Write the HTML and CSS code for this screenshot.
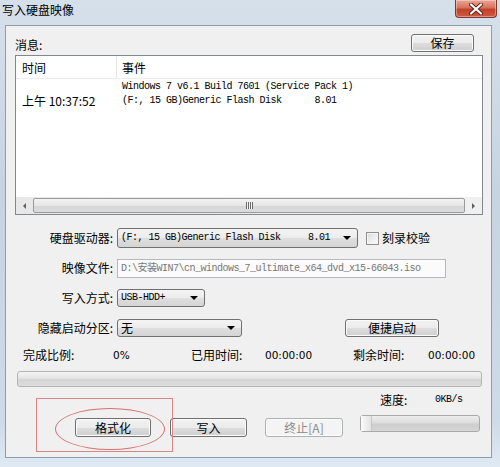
FILE: index.html
```html
<!DOCTYPE html>
<html lang="zh-CN">
<head>
    <meta charset="UTF-8">
    <title>写入硬盘映像</title>
    <link rel="stylesheet" href="styles.css">
</head>
<body>
<div class="window">
    <div class="titlebar">
        <span class="title">写入硬盘映像</span>
        <div class="close">
            <svg width="14" height="12" viewBox="0 0 14 12">
                <path d="M2 1.5 L12 10.5 M12 1.5 L2 10.5" stroke="#5a2018" stroke-width="4" stroke-linecap="round"/>
                <path d="M2 1.5 L12 10.5 M12 1.5 L2 10.5" stroke="#fff" stroke-width="2.2" stroke-linecap="round"/>
            </svg>
        </div>
    </div>

    <div class="client">
        <div class="msg-head">
            <span>消息:</span>
            <button class="btn save">保存</button>
        </div>

        <div class="listbox">
            <div class="list-head">
                <span class="col-time head-sep">时间</span>
                <span class="col-event">事件</span>
            </div>
            <div class="list-row">
                <span class="col-time time">上午 10:37:52</span>
                <span class="col-event mono">Windows 7 v6.1 Build 7601 (Service Pack 1)
(F:, 15 GB)Generic Flash Disk      8.01</span>
            </div>
            <div class="hscroll">
                <div class="sb-arrow"><span class="tri-left"></span></div>
                <div class="sb-thumb"><span class="grip"></span></div>
                <div class="sb-arrow"><span class="tri-right"></span></div>
            </div>
        </div>

        <div class="form">
            <label>硬盘驱动器:</label>
            <div class="ctrl">
                <div class="combo drive"><span class="mono">(F:, 15 GB)Generic Flash Disk     8.01</span><span class="arrow"></span></div>
                <span class="checkbox"></span>
                <span class="check-label">刻录校验</span>
            </div>

            <label>映像文件:</label>
            <div class="ctrl">
                <div class="textbox mono">D:\安装WIN7\cn_windows_7_ultimate_x64_dvd_x15-66043.iso</div>
            </div>

            <label>写入方式:</label>
            <div class="ctrl">
                <div class="combo mode"><span class="mono">USB-HDD+</span><span class="arrow"></span></div>
            </div>

            <label>隐藏启动分区:</label>
            <div class="ctrl">
                <div class="combo hidden-part"><span>无</span><span class="arrow"></span></div>
                <button class="btn quick">便捷启动</button>
            </div>
        </div>

        <div class="status">
            <span class="s1">完成比例:</span>
            <span class="s2 num">0%</span>
            <span class="s3">已用时间:</span>
            <span class="s4 num">00:00:00</span>
            <span class="s5">剩余时间:</span>
            <span class="num">00:00:00</span>
        </div>

        <div class="progress"></div>

        <div class="speed">
            <span class="speed-label">速度:</span>
            <span class="mono">0KB/s</span>
        </div>

        <div class="actions">
            <button class="btn act-format">格式化</button>
            <button class="btn act-write">写入</button>
            <button class="btn act-stop" disabled>终止[A]</button>
            <div class="mini-progress"><span class="mini-start"></span></div>
        </div>
    </div>

    <!-- 标注 -->
    <div class="mark-rect"></div>
    <div class="mark-ellipse"></div>
</div>
</body>
</html>
```

FILE: styles.css
```css
body {
    margin: 0;
    font-family: "Noto Sans CJK SC", sans-serif;
    font-size: 12px;
    color: #000;
}
.window {
    position: relative;
    width: 500px;
    height: 467px;
    box-sizing: border-box;
    padding: 0 8px 9px 5px;
    background: linear-gradient(#d6e0ea, #c6d4e2 40%, #cddbe8 90%, #dfe9f3);
    display: flex;
    flex-direction: column;
    overflow: hidden;
}
.titlebar {
    height: 25px;
    margin: 0 -8px 0 -5px;
    padding: 0 3px 0 2px;
    display: flex;
    justify-content: space-between;
    align-items: flex-start;
    flex-shrink: 0;
}
.title {
    margin-top: 3px;
    line-height: 14px;
    font-size: 12px;
}
.close {
    width: 42px;
    height: 18px;
    box-sizing: border-box;
    border: 1px solid #83362b;
    border-top: none;
    border-radius: 0 0 4px 4px;
    background: linear-gradient(#eba597, #d6735f 45%, #c2412c 55%, #cf5a40);
    display: flex;
    align-items: center;
    justify-content: center;
    box-shadow: inset 0 0 0 1px rgba(255,255,255,0.35);
}
.client {
    flex: 1;
    background: #f0f0f0;
    border: 1px solid #8e9cad;
    display: flex;
    flex-direction: column;
}
.mono {
    font-family: "Liberation Mono", "Noto Sans CJK SC", monospace;
    font-size: 10px;
    letter-spacing: -0.5px;
    white-space: pre;
}
.num {
    font-family: "DejaVu Sans", sans-serif;
    font-size: 10.5px;
}
.btn {
    font-family: "Noto Sans CJK SC", sans-serif;
    font-size: 12px;
    color: #000;
    padding: 0;
    height: 19px;
    line-height: 16px;
    border: 1px solid #707070;
    border-radius: 3px;
    background: linear-gradient(#f2f2f2, #ebebeb 50%, #dddddd 51%, #cfcfcf);
    box-shadow: inset 0 0 0 1px #fcfcfc;
}
.btn:disabled {
    color: #8b8b8b;
    border-color: #adb2b5;
    background: #f4f4f4;
}

/* 消息 */
.msg-head {
    margin-top: 8px;
    height: 18px;
    padding: 0 17px 0 9px;
    display: flex;
    justify-content: space-between;
    align-items: flex-end;
    line-height: 14px;
}
.save {
    width: 63px;
    height: 18px;
}
.listbox {
    margin: 3px 0 0 9px;
    width: 468px;
    height: 160px;
    box-sizing: border-box;
    border: 1px solid #828790;
    background: #fff;
    display: flex;
    flex-direction: column;
}
.list-head {
    height: 22px;
    display: flex;
    align-items: center;
    border-bottom: 1px solid #ececec;
}
.col-time {
    width: 100px;
    padding-left: 6px;
    box-sizing: border-box;
}
.head-sep {
    width: 101px;
    border-right: 1px solid #e5e5e5;
    line-height: 21px;
}
.list-head .col-event {
    padding-left: 5px;
}
.list-row {
    display: flex;
    padding-top: 1px;
    line-height: 14px;
}
.list-row .col-event {
    padding-left: 6px;
}
.time {
    padding-top: 14px;
}
.hscroll {
    margin-top: auto;
    height: 17px;
    display: flex;
    background: linear-gradient(90deg, #e8e8e8, #f0f0f0);
}
.sb-arrow {
    width: 17px;
    display: flex;
    align-items: center;
    justify-content: center;
}
.tri-left, .tri-right {
    width: 0;
    height: 0;
    border-top: 3px solid transparent;
    border-bottom: 3px solid transparent;
}
.tri-left { border-right: 3px solid #606060; }
.tri-right { border-left: 3px solid #606060; }
.sb-thumb {
    flex: 1;
    margin: 1px 0;
    border: 1px solid #9a9a9a;
    border-radius: 2px;
    background: linear-gradient(#f3f3f3, #e6e6e6 50%, #d6d6d6 51%, #dcdcdc);
    display: flex;
    align-items: center;
    justify-content: center;
}
.grip {
    width: 7px;
    height: 7px;
    background: repeating-linear-gradient(90deg, #6a6a6a 0 1px, #f4f4f4 1px 2px);
}

/* 表单 */
.form {
    margin-top: 13px;
    display: grid;
    grid-template-columns: 107px auto;
    grid-auto-rows: 20px;
    column-gap: 4px;
    row-gap: 10px;
}
.form label {
    justify-self: end;
    align-self: center;
    line-height: 14px;
}
.ctrl {
    display: flex;
    align-items: center;
}
.combo {
    height: 20px;
    box-sizing: border-box;
    border: 1px solid #707070;
    border-radius: 3px;
    background: linear-gradient(#f4f4f4, #ececec 50%, #dfdfdf 51%, #d4d4d4);
    display: flex;
    align-items: center;
    justify-content: space-between;
    padding: 0 6px 0 3px;
    line-height: 14px;
}
.arrow {
    width: 0;
    height: 0;
    border-left: 4px solid transparent;
    border-right: 4px solid transparent;
    border-top: 4px solid #000;
}
.drive { width: 241px; }
.mode { width: 88px; height: 18px; }
.hidden-part { width: 125px; height: 18px; }
.checkbox {
    margin-left: 8px;
    width: 13px;
    height: 13px;
    box-sizing: border-box;
    border: 1px solid #8f8f8f;
    background: linear-gradient(135deg, #dcdcdc, #fdfdfd);
    box-shadow: inset 0 0 0 1px #f4f4f4;
}
.check-label {
    margin-left: 3px;
    line-height: 14px;
}
.textbox {
    width: 329px;
    height: 19px;
    box-sizing: border-box;
    border: 1px solid #b5b9bf;
    background: #fbfbfb;
    color: #777;
    padding-left: 3px;
    line-height: 17px;
}
.quick {
    margin-left: 103px;
    width: 94px;
    height: 18px;
}

/* 进度 */
.status {
    margin-top: 10px;
    height: 14px;
    padding-left: 17px;
    display: flex;
    align-items: center;
    line-height: 14px;
}
.s1 { width: 90px; }
.s2 { width: 78px; }
.s3 { width: 74px; }
.s4 { width: 88px; }
.s5 { width: 75px; }
.progress {
    margin: 9px 0 0 11px;
    width: 465px;
    height: 16px;
    box-sizing: border-box;
    border: 1px solid #b4b4b4;
    border-radius: 3px;
    background: linear-gradient(#f4f4f4, #e4e4e4 45%, #d4d4d4 55%, #dddddd);
}
.speed {
    margin-top: 6px;
    height: 14px;
    padding-left: 374px;
    display: flex;
    align-items: center;
    line-height: 14px;
}
.speed-label { width: 55px; }
.actions {
    margin-top: 11px;
    padding-left: 69px;
    display: flex;
    align-items: flex-start;
}
.act-format { width: 76px; }
.act-write { width: 77px; margin-left: 19px; }
.act-stop { width: 78px; margin-left: 18px; }
.mini-progress {
    margin: -3px 0 0 17px;
    width: 120px;
    height: 17px;
    box-sizing: border-box;
    border: 1px solid #a9a9a9;
    border-radius: 3px;
    background: linear-gradient(#eeeeee, #dddddd 45%, #cdcdcd 55%, #d6d6d6);
    display: flex;
}
.mini-start {
    width: 10px;
    background: linear-gradient(90deg, #fafafa, #e2e2e2);
    border-right: 1px solid #c8c8c8;
}

/* 标注 */
.mark-rect {
    position: absolute;
    left: 36px;
    top: 398px;
    width: 135px;
    height: 52px;
    border: 1px solid #d88585;
}
.mark-ellipse {
    position: absolute;
    left: 55px;
    top: 408px;
    width: 110px;
    height: 42px;
    box-sizing: border-box;
    border: 1.5px solid #d87070;
    border-radius: 50%;
}
```
